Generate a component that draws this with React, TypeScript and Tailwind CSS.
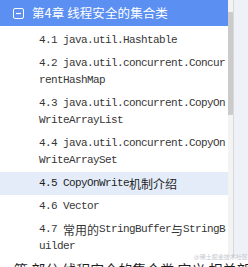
const items: { parts: { t: string; cjk?: boolean }[]; active?: boolean }[] = [
  { parts: [{ t: "4.1 java.util.Hashtable" }] },
  { parts: [{ t: "4.2 java.util.concurrent.ConcurrentHashMap" }] },
  { parts: [{ t: "4.3 java.util.concurrent.CopyOnWriteArrayList" }] },
  { parts: [{ t: "4.4 java.util.concurrent.CopyOnWriteArraySet" }] },
  { parts: [{ t: "4.5 CopyOnWrite" }, { t: "机制介绍", cjk: true }], active: true },
  { parts: [{ t: "4.6 Vector" }] },
  {
    parts: [
      { t: "4.7 " },
      { t: "常用的", cjk: true },
      { t: "StringBuffer" },
      { t: "与", cjk: true },
      { t: "StringBuilder" },
    ],
  },
];

function MinusBox() {
  return (
    <svg width="11" height="11" viewBox="0 0 11 11" className="shrink-0">
      <rect x="0.5" y="0.5" width="10" height="10" rx="1.5" fill="none" stroke="white" strokeWidth="1" />
      <line x1="3" y1="5.5" x2="8" y2="5.5" stroke="white" strokeWidth="1.2" />
    </svg>
  );
}

export default function App() {
  return (
    <div className="relative w-[248px] h-[267px] overflow-hidden bg-white">
      <div className="flex h-[258px] overflow-hidden">
        <div className="w-[228px] shrink-0">
          <div className="h-[26px] bg-[#5b8ff1] flex items-center pl-[13px] gap-[8px]">
            <MinusBox />
            <span className="text-white text-[12.5px] tracking-[0.1px] leading-[26px] font-['Noto_Sans_CJK_SC',sans-serif]">
              第4章 线程安全的集合类
            </span>
          </div>
          <div className="mt-[3px]">
            {items.map((it, i) => (
              <div
                key={i}
                className={`pl-[39px] py-[3px] text-[11px] leading-[17px] font-['Liberation_Mono',monospace] break-all ${
                  it.active ? "bg-[#e3ecf8] text-[#1f1f1f]" : "text-[#363636]"
                }`}
              >
                {it.parts.map((p, j) =>
                  p.cjk ? (
                    <span
                      key={j}
                      className="align-top text-[12px] leading-[17px] font-['Noto_Sans_CJK_SC',sans-serif]"
                    >
                      {p.t}
                    </span>
                  ) : (
                    <span key={j} className="align-top leading-[17px] tracking-[-0.6px]">
                      {p.t}
                    </span>
                  )
                )}
              </div>
            ))}
          </div>
        </div>
        <div className="w-[6px] shrink-0 flex">
          <div className="w-[5px] bg-[#f3f3f3] pt-[12px]">
            <div className="h-[103px] bg-[#cbcbcb] rounded-[1px]" />
          </div>
          <div className="w-[1px] bg-[#d9d9d9]" />
        </div>
        <div className="flex-1 bg-[#eef1f7]" />
      </div>
      <div className="whitespace-nowrap text-[14px] leading-[20px] text-[#1e1e1e] font-['Noto_Sans_CJK_SC',sans-serif] pt-[1px]">
        一篇 部分  线程安全的集合类 定义 相关部分
      </div>
      <div className="absolute left-[194px] top-[253px] text-[6px] leading-[8px] text-[#c4c8cf] font-['Noto_Sans_CJK_SC',sans-serif] whitespace-nowrap">
        @稀土掘金技术社区
      </div>
    </div>
  );
}
